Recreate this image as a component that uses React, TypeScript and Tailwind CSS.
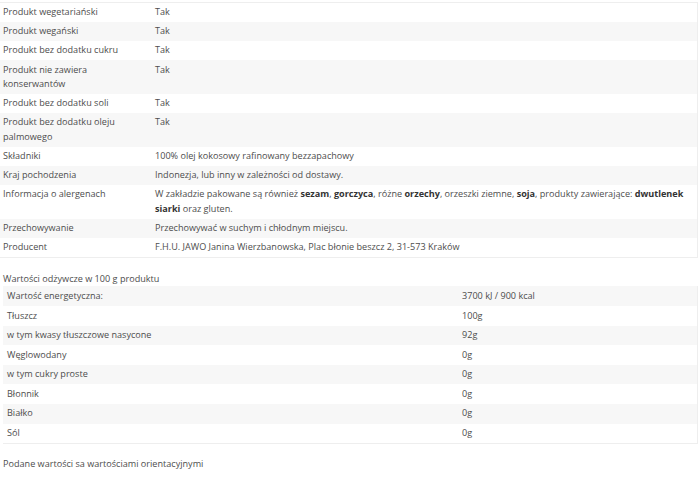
import React from 'react';

const attributes: { label: string; value: React.ReactNode }[] = [
  { label: 'Produkt wegetariański', value: 'Tak' },
  { label: 'Produkt wegański', value: 'Tak' },
  { label: 'Produkt bez dodatku cukru', value: 'Tak' },
  { label: 'Produkt nie zawiera konserwantów', value: 'Tak' },
  { label: 'Produkt bez dodatku soli', value: 'Tak' },
  { label: 'Produkt bez dodatku oleju palmowego', value: 'Tak' },
  { label: 'Składniki', value: '100% olej kokosowy rafinowany bezzapachowy' },
  { label: 'Kraj pochodzenia', value: 'Indonezja, lub inny w zależności od dostawy.' },
  {
    label: 'Informacja o alergenach',
    value: (
      <>
        W zakładzie pakowane są również <b className="font-bold text-[#333]">sezam</b>,{' '}
        <b className="font-bold text-[#333]">gorczyca</b>, różne <b className="font-bold text-[#333]">orzechy</b>, orzeszki
        ziemne, <b className="font-bold text-[#333]">soja</b>, produkty zawierające:{' '}
        <b className="font-bold text-[#333]">dwutlenek siarki</b> oraz gluten.
      </>
    ),
  },
  { label: 'Przechowywanie', value: 'Przechowywać w suchym i chłodnym miejscu.' },
  { label: 'Producent', value: 'F.H.U. JAWO Janina Wierzbanowska, Plac błonie beszcz 2, 31-573 Kraków' },
];

const nutrition = [
  ['Wartość energetyczna:', '3700 kJ / 900 kcal'],
  ['Tłuszcz', '100g'],
  ['w tym kwasy tłuszczowe nasycone', '92g'],
  ['Węglowodany', '0g'],
  ['w tym cukry proste', '0g'],
  ['Błonnik', '0g'],
  ['Białko', '0g'],
  ['Sól', '0g'],
];

export default function App() {
  return (
    <div className="w-[700px] h-[480px] bg-white text-[9.1px] leading-[14.6px] text-[#4d4d4d] font-['Open_Sans',sans-serif] pt-[2px]">
      {/* Product attributes */}
      <table className="w-[698px] border-collapse border-t border-r border-b border-[#eeeeee]">
        <tbody>
          {attributes.map((row, i) => (
            <tr key={row.label} className={i % 2 === 1 ? 'bg-[#f7f7f7]' : 'bg-white'}>
              <td className="w-[155px] pl-[3px] pr-[8px] py-[2.25px] align-top">{row.label}</td>
              <td className="py-[2.25px] pr-[6px] align-top">{row.value}</td>
            </tr>
          ))}
        </tbody>
      </table>

      {/* Nutrition facts */}
      <div className="mt-[14px] pl-[3px]">Wartości odżywcze w 100 g produktu</div>
      <table className="ml-[3px] w-[695px] border-collapse border-r border-b border-[#eeeeee]">
        <tbody>
          {nutrition.map(([label, value], i) => (
            <tr key={label} className={i % 2 === 0 ? 'bg-[#f7f7f7]' : 'bg-white'}>
              <td className="w-[459px] pl-[4px] h-[19.6px] align-middle">{label}</td>
              <td className="h-[19.6px] align-middle">{value}</td>
            </tr>
          ))}
        </tbody>
      </table>

      <div className="mt-[13px] pl-[3px]">Podane wartości sa wartościami orientacyjnymi</div>
    </div>
  );
}
